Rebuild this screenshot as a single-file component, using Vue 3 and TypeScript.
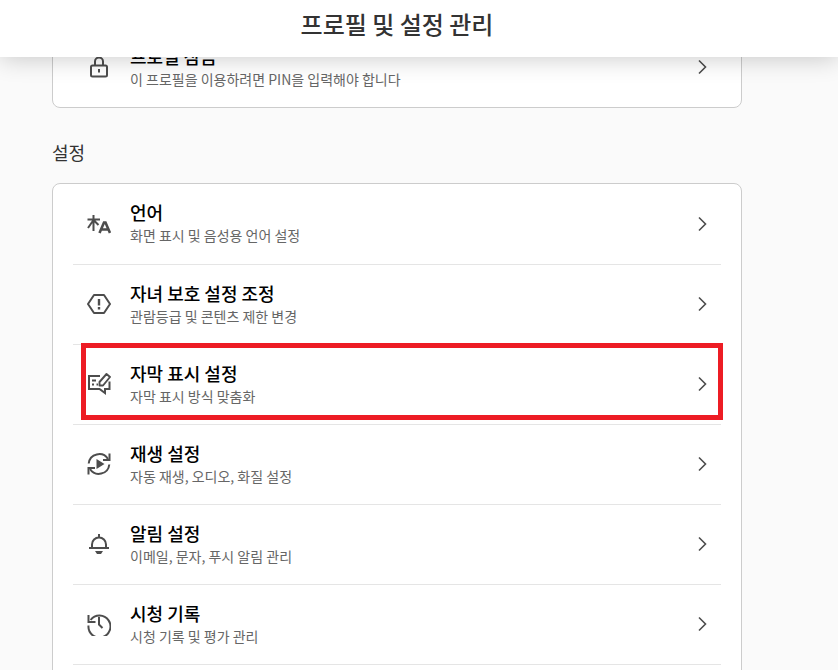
<script setup lang="ts">
interface Row {
  key: string
  title: string
  sub: string
}
const lockRow: Row = { key: 'lock', title: '프로필 잠금', sub: '이 프로필을 이용하려면 PIN을 입력해야 합니다' }
const rows: Row[] = [
  { key: 'lang', title: '언어', sub: '화면 표시 및 음성용 언어 설정' },
  { key: 'parent', title: '자녀 보호 설정 조정', sub: '관람등급 및 콘텐츠 제한 변경' },
  { key: 'subs', title: '자막 표시 설정', sub: '자막 표시 방식 맞춤화' },
  { key: 'play', title: '재생 설정', sub: '자동 재생, 오디오, 화질 설정' },
  { key: 'bell', title: '알림 설정', sub: '이메일, 문자, 푸시 알림 관리' },
  { key: 'history', title: '시청 기록', sub: '시청 기록 및 평가 관리' },
  { key: 'none', title: '', sub: '' }
]
</script>

<template>
  <div class="page">
    <header class="top">프로필 및 설정 관리</header>
    <main class="content">
      <section class="card lockcard">
        <div class="row">
          <svg class="icon" viewBox="0 0 24 24" fill="none" stroke="currentColor" stroke-width="2">
            <rect x="4" y="10.500" width="16" height="11" rx="1.500" />
            <path d="M8 10.500V6.500a4 4 0 0 1 8 0V10.500" />
            <path d="M12 14v3.500" />
          </svg>
          <div class="text">
            <div class="title">{{ lockRow.title }}</div>
            <div class="sub">{{ lockRow.sub }}</div>
          </div>
          <svg class="chev" viewBox="0 0 10 16" fill="none" stroke="currentColor" stroke-width="1.6"><path d="M2 1.500 8.500 8 2 14.500" /></svg>
        </div>
      </section>
      <h2 class="label">설정</h2>
      <section class="card list">
        <div v-for="r in rows" :key="r.key" class="row">
          <svg v-if="r.key === 'lang'" class="icon" viewBox="0 0 24 24" fill="none" stroke="currentColor" stroke-width="2">
            <path d="M0.500 7.500h12.500M6.500 3v16M6.500 8 1 16M6.500 8l5 5" stroke-width="2" />
            <path d="M12.500 21 17 10.500h1.500L23 21M14.300 17.500h7" stroke-width="2.600" />
          </svg>
          <svg v-else-if="r.key === 'parent'" class="icon" viewBox="0 0 24 24" fill="none" stroke="currentColor" stroke-width="2">
            <path d="M7 3h10l6 9-6 9H7l-6-9Z" stroke-linejoin="round" />
            <path d="M12 7v6.500" stroke-width="2.400" />
            <path d="M12 15v2.500" stroke-width="2.400" />
          </svg>
          <svg v-else-if="r.key === 'subs'" class="icon" viewBox="0 0 24 24" fill="none" stroke="currentColor" stroke-width="2">
            <path d="M13 4H2v13h10.500l5.500 4v-4h4.500V9.500" />
            <path d="M5 8.500h4M5 12.500h2M9.500 12.500h1.500" />
            <path d="M12.500 13.500v-3.500L19.500 2l3.500 3-7 8.500Z" stroke-linejoin="round" stroke-width="1.900" />
          </svg>
          <svg v-else-if="r.key === 'play'" class="icon" viewBox="0 0 24 24" fill="none" stroke="currentColor" stroke-width="2">
            <path d="M1.700 11.500A10.500 10.500 0 0 1 21 7" />
            <path d="M22.300 12.500A10.500 10.500 0 0 1 3 17" />
            <path d="M22.500 1.500V8H16M1.500 22.500V16H8" />
            <path d="M9.500 7 17.500 12l-8 5Z" fill="currentColor" stroke="none" />
          </svg>
          <svg v-else-if="r.key === 'bell'" class="icon" viewBox="0 0 24 24" fill="none" stroke="currentColor" stroke-width="2">
            <path d="M5 15.500v-3a7 7 0 0 1 14 0v3" />
            <path d="M2 16h20" />
            <path d="M12 2v3.500" />
            <path d="M8 19h8l-2 3h-4Z" fill="currentColor" stroke="none" />
          </svg>
          <svg v-else-if="r.key === 'history'" class="icon" viewBox="0 0 24 24" fill="none" stroke="currentColor" stroke-width="2">
            <path d="M3.600 8A11 11 0 1 1 1.500 13.500" />
            <path d="M1.500 3v7H8.500" />
            <path d="M12 5v7.500l3.500 3.500" />
          </svg>
          <template v-if="r.title">
            <div class="text">
              <div class="title">{{ r.title }}</div>
              <div class="sub">{{ r.sub }}</div>
            </div>
            <svg class="chev" viewBox="0 0 10 16" fill="none" stroke="currentColor" stroke-width="1.6"><path d="M2 1.500 8.500 8 2 14.500" /></svg>
          </template>
        </div>
      </section>
    </main>
    <div class="mark"></div>
  </div>
</template>

<style>
html, body { margin: 0; height: 100%; overflow: hidden; background: #fafafa; }
</style>

<style scoped>
.page {
  position: relative;
  width: 838px;
  height: 670px;
  overflow: hidden;
  background: #fafafa;
  font-family: "Noto Sans CJK KR", "Noto Sans", sans-serif;
  color: #222;
}
.top {
  position: absolute;
  top: 0;
  left: 0;
  right: 0;
  z-index: 2;
  height: 57px;
  display: flex;
  align-items: center;
  justify-content: center;
  padding: 0 44px 10px 0;
  box-sizing: border-box;
  background: #fff;
  box-shadow: 0 2px 24px rgba(0, 0, 0, 0.2);
  font-size: 24px;
  font-weight: 500;
  color: #333;
}
.content {
  width: 690px;
  margin-left: 52px;
  padding-top: 26px;
}
.card {
  box-sizing: border-box;
  background: #fff;
  border: 1px solid #ccc;
  border-radius: 8px;
  padding: 0 20px;
}
.label {
  margin: 29px 0 16px;
  font-size: 18px;
  line-height: 30px;
  font-weight: 400;
  color: #333;
  height: 30px;
}
.row {
  height: 80px;
  box-sizing: border-box;
  display: flex;
  align-items: center;
  border-bottom: 1px solid #e5e5e5;
  color: #4d4d4d;
  padding-bottom: 1px;
}
.list .row:first-child { height: 81px; }
.lockcard .row { border-bottom: 0; }
.icon {
  width: 24px;
  height: 24px;
  margin-left: 14px;
  flex: none;
}
.text {
  flex: 1;
  margin-left: 19px;
  margin-bottom: 2px;
}
.lockcard .text { margin-bottom: 0; }
.title {
  font-size: 18px;
  line-height: 24px;
  font-weight: 500;
  color: #000;
}
.sub {
  font-size: 14px;
  line-height: 20px;
  color: #666;
  margin-top: 1px;
}
.chev {
  width: 10px;
  height: 16px;
  margin-right: 14px;
  flex: none;
}
.mark {
  position: absolute;
  left: 81px;
  top: 343px;
  width: 642px;
  height: 77px;
  box-sizing: border-box;
  border: 5px solid #ed1c24;
}
</style>
